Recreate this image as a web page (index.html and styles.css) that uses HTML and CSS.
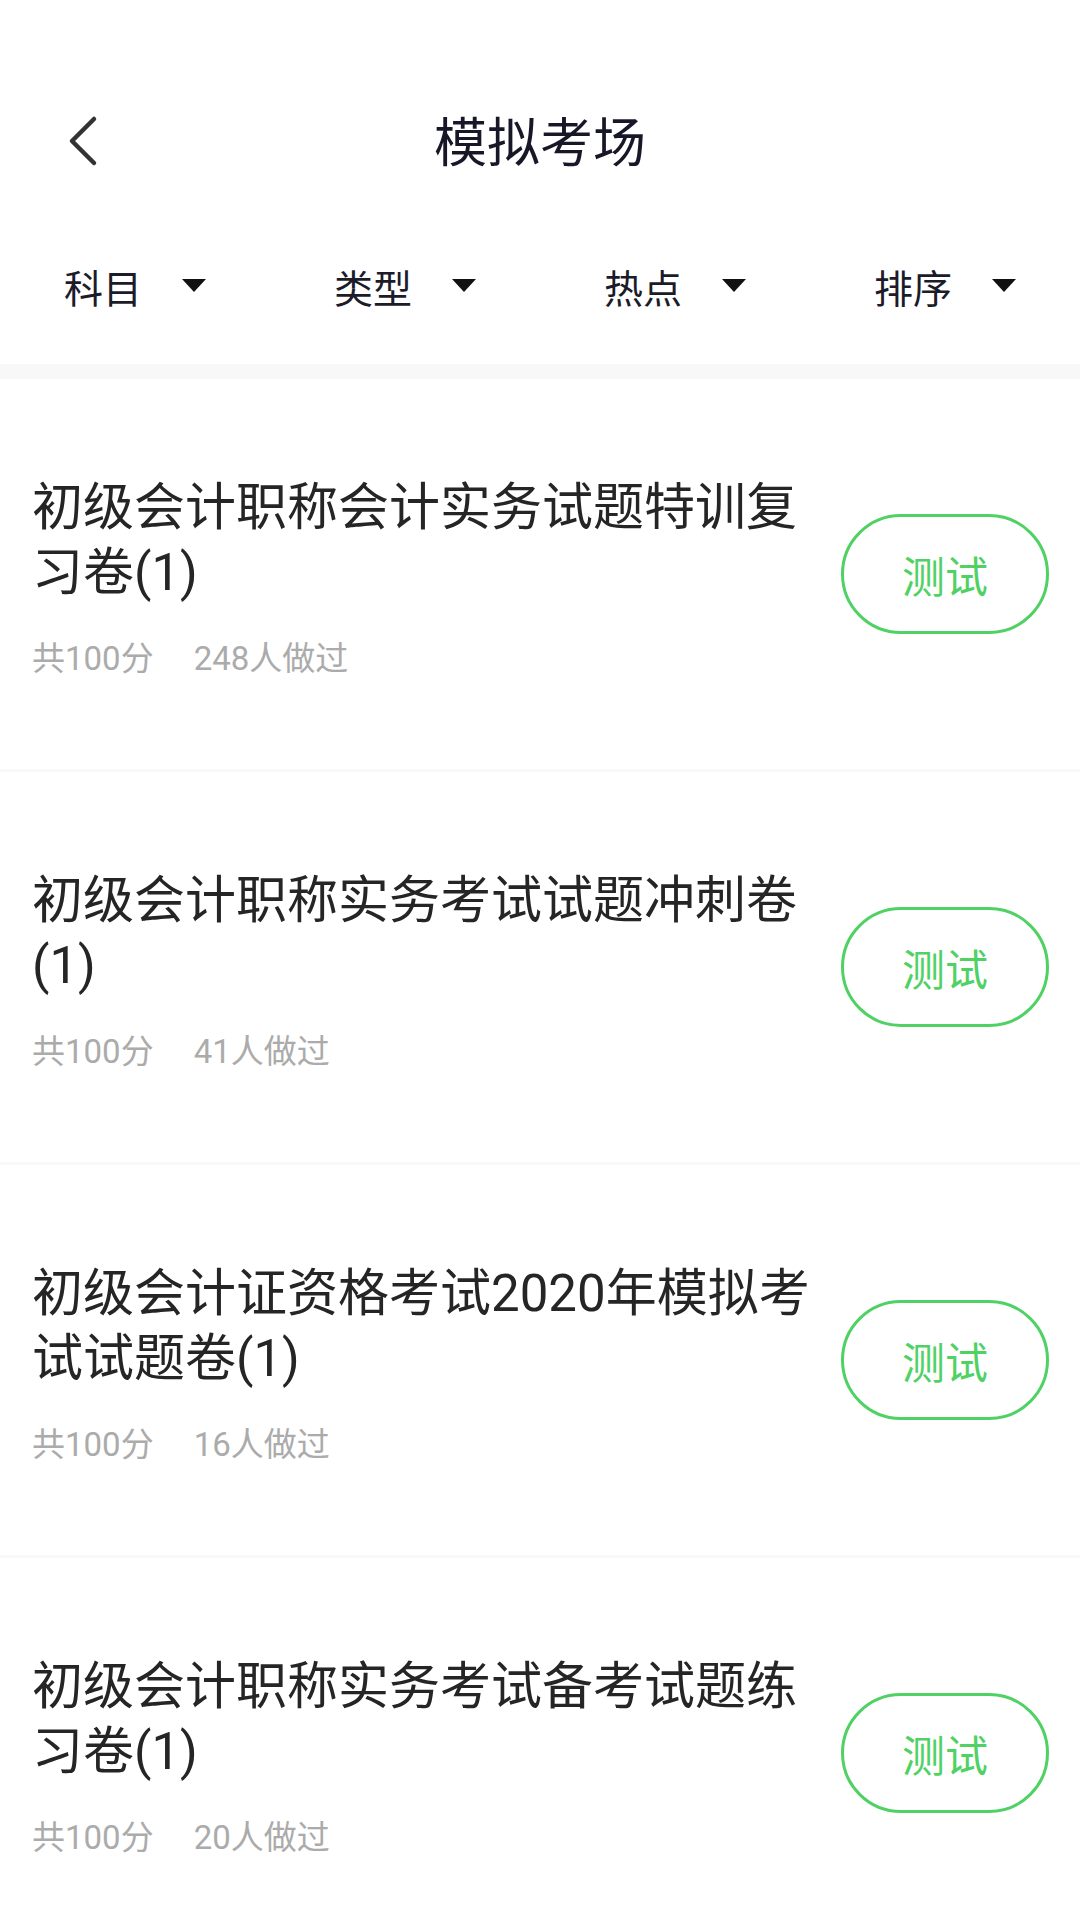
FILE: index.html
```html
<!DOCTYPE html>
<html lang="zh-CN">
<head>
  <meta charset="UTF-8" />
  <meta name="viewport" content="width=device-width, initial-scale=1.0"/>
  <title>模拟考场</title>
  <link rel="stylesheet" href="styles.css">
</head>
<body>

<header>
  <div class="toolbar">
    <a class="back" href="#">
      <svg width="40" height="56" viewBox="0 0 40 56">
        <polyline points="30,6 8,28 30,50" fill="none" stroke="#333" stroke-width="4.5" stroke-linecap="round" stroke-linejoin="round"/>
      </svg>
    </a>
    <h1>模拟考场</h1>
  </div>

  <!-- FILTERS -->
  <nav class="filters">
    <div class="filter">科目<span class="arrow"></span></div>
    <div class="filter">类型<span class="arrow"></span></div>
    <div class="filter">热点<span class="arrow"></span></div>
    <div class="filter">排序<span class="arrow"></span></div>
  </nav>
</header>

<!-- EXAM LIST -->
<section class="exams">

  <div class="exam">
    <div class="info">
      <h3>初级会计职称会计实务试题特训复习卷(1)</h3>
      <p class="meta"><span>共100分</span><span>248人做过</span></p>
    </div>
    <a class="btn" href="#">测试</a>
  </div>

  <div class="exam">
    <div class="info">
      <h3>初级会计职称实务考试试题冲刺卷(1)</h3>
      <p class="meta"><span>共100分</span><span>41人做过</span></p>
    </div>
    <a class="btn" href="#">测试</a>
  </div>

  <div class="exam">
    <div class="info">
      <h3>初级会计证资格考试2020年模拟考试试题卷(1)</h3>
      <p class="meta"><span>共100分</span><span>16人做过</span></p>
    </div>
    <a class="btn" href="#">测试</a>
  </div>

  <div class="exam">
    <div class="info">
      <h3>初级会计职称实务考试备考试题练习卷(1)</h3>
      <p class="meta"><span>共100分</span><span>20人做过</span></p>
    </div>
    <a class="btn" href="#">测试</a>
  </div>

</section>

</body>
</html>
```

FILE: styles.css
```css
*{
  margin:0;
  padding:0;
  box-sizing:border-box;
  font-family: Roboto, "Noto Sans CJK SC", sans-serif;
}

body{
  background:white;
  color:#252525;
  width:1080px;
  height:1920px;
  overflow:hidden;
}

header{
  background:white;
  border-bottom:15px solid #f8f8f8;
}

.toolbar{
  position:relative;
  height:226px;
  padding-top:52px;
  display:flex;
  align-items:center;
  justify-content:center;
}

.back{
  position:absolute;
  left:64px;
  top:113px;
  display:block;
  line-height:0;
}

.toolbar h1{
  font-size:53px;
  font-weight:normal;
  color:#171727;
}

.filters{
  display:grid;
  grid-template-columns:repeat(4,1fr);
  height:138px;
  padding-bottom:19px;
}

.filter{
  display:flex;
  align-items:center;
  justify-content:center;
  font-size:39px;
  color:#1b1b29;
}

.arrow{
  width:0;
  height:0;
  margin-left:40px;
  border-left:12.5px solid transparent;
  border-right:12.5px solid transparent;
  border-top:13px solid #111;
}

.exam{
  display:flex;
  align-items:center;
  height:393px;
  padding:0 31px 0 32px;
  border-bottom:3px solid #f8f8f8;
}

.info{
  flex:1;
  margin-right:20px;
  padding-top:7px;
}

.info h3{
  font-size:51px;
  font-weight:normal;
  line-height:65px;
  color:#252525;
}

.meta{
  margin-top:32px;
  font-size:33px;
  line-height:44px;
  color:#ababab;
}

.meta span{
  margin-right:40px;
}

.btn{
  flex:none;
  display:flex;
  align-items:center;
  justify-content:center;
  width:208px;
  height:120px;
  border:3px solid #4fd164;
  border-radius:60px;
  color:#4fd164;
  font-size:43px;
  text-decoration:none;
}
```
